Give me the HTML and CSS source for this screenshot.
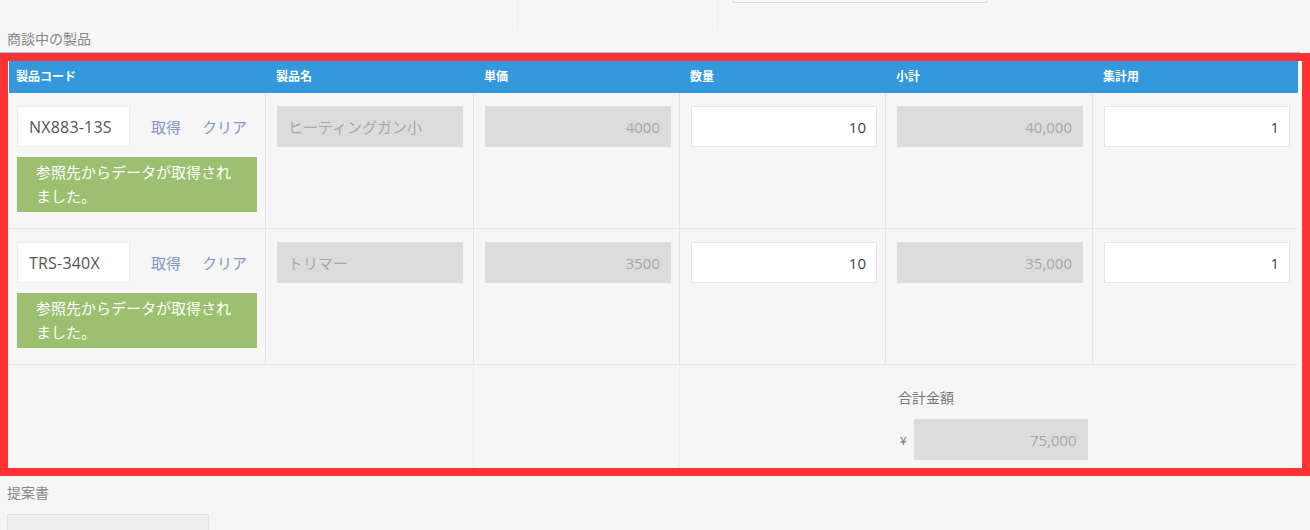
FILE: index.html
```html
<!DOCTYPE html>
<html lang="ja">
    <head>
        <meta charset="utf-8">
        <title>商談中の製品</title>
        <meta name="viewport" content="width=device-width, initial-scale=1">
        <link rel="stylesheet" href="styles.css">
    </head>

    <body>
        <div class="top-strip">
            <div class="strip-cell strip-a"></div>
            <div class="strip-cell strip-b"></div>
            <div class="strip-cell strip-c"><div class="strip-input"></div></div>
        </div>

        <div class="field-label table-label">商談中の製品</div>

        <div class="highlight">
            <div class="subtable">
                <div class="head-cell first">製品コード</div>
                <div class="head-cell">製品名</div>
                <div class="head-cell">単価</div>
                <div class="head-cell">数量</div>
                <div class="head-cell">小計</div>
                <div class="head-cell">集計用</div>

                <!-- 1行目 -->
                <div class="cell first">
                    <div class="lookup">
                        <input class="code-input" type="text" value="NX883-13S">
                        <span class="lookup-link">取得</span>
                        <span class="lookup-link">クリア</span>
                    </div>
                    <div class="lookup-msg">参照先からデータが取得されました。</div>
                </div>
                <div class="cell"><input class="box readonly left" type="text" value="ヒーティングガン小" readonly></div>
                <div class="cell"><input class="box readonly" type="text" value="4000" readonly></div>
                <div class="cell"><input class="box" type="text" value="10"></div>
                <div class="cell"><input class="box readonly" type="text" value="40,000" readonly></div>
                <div class="cell last"><input class="box" type="text" value="1"></div>

                <!-- 2行目 -->
                <div class="cell first">
                    <div class="lookup">
                        <input class="code-input" type="text" value="TRS-340X">
                        <span class="lookup-link">取得</span>
                        <span class="lookup-link">クリア</span>
                    </div>
                    <div class="lookup-msg">参照先からデータが取得されました。</div>
                </div>
                <div class="cell"><input class="box readonly left" type="text" value="トリマー" readonly></div>
                <div class="cell"><input class="box readonly" type="text" value="3500" readonly></div>
                <div class="cell"><input class="box" type="text" value="10"></div>
                <div class="cell"><input class="box readonly" type="text" value="35,000" readonly></div>
                <div class="cell last"><input class="box" type="text" value="1"></div>

                <!-- 合計 -->
                <div class="foot-cell none"></div>
                <div class="foot-cell"></div>
                <div class="foot-cell"></div>
                <div class="foot-cell none"></div>
                <div class="foot-cell total">
                    <div class="total-label">合計金額</div>
                    <div class="total-row">
                        <span class="yen">¥</span>
                        <input class="box readonly total-box" type="text" value="75,000" readonly>
                    </div>
                </div>
                <div class="foot-cell none"></div>
            </div>
        </div>

        <div class="field-label proposal-label">提案書</div>
        <div class="proposal-box"></div>
    </body>
</html>
```

FILE: styles.css
```css
body {
    margin: 0;
    background-color: #f6f6f6;
    font-family: "Noto Sans CJK JP", "Noto Sans", sans-serif;
    color: #555;
    overflow: hidden;
}

.top-strip {
    display: flex;
    height: 30px;
}

.strip-cell {
    box-sizing: border-box;
    height: 30px;
}

.strip-a {
    width: 518px;
    border-right: 1px solid #efefef;
}

.strip-b {
    width: 200px;
    border-right: 1px solid #efefef;
}

.strip-c {
    padding-left: 15px;
}

.strip-input {
    width: 254px;
    height: 3px;
    box-sizing: border-box;
    background-color: #fafafa;
    border: 1px solid #dedede;
    border-top: none;
}

.field-label {
    font-size: 14px;
    line-height: 16px;
    color: #888;
    padding-left: 7px;
}

.table-label {
    height: 22px;
    margin-right: 10px;
    border-bottom: 1px solid #8fc6ef;
}

.highlight {
    border: 8px solid #ff3333;
}

.subtable {
    display: grid;
    grid-template-columns: 257px 208px 206px 206px 207px 205px;
    margin: 0 4px 0 1px;
}

.head-cell {
    height: 32px;
    line-height: 30px;
    background-color: #3498dd;
    color: #fff;
    font-size: 12px;
    font-weight: bold;
    padding-left: 10px;
}

.head-cell.first {
    padding-left: 7px;
}

.cell {
    height: 136px;
    box-sizing: border-box;
    padding: 13px 0 0 11px;
    border-right: 1px solid #e4e4e4;
    border-bottom: 1px solid #e4e4e4;
}

.cell.first {
    padding-left: 8px;
}

.cell.last {
    border-right: none;
}

.lookup {
    display: flex;
    align-items: center;
    gap: 21px;
}

.code-input {
    width: 113px;
    height: 41px;
    box-sizing: border-box;
    padding: 0 0 0 11px;
    border: 1px solid #ececec;
    background-color: #fff;
    font-family: "Open Sans", "Noto Sans CJK JP", sans-serif;
    font-size: 16px;
    letter-spacing: 0.2px;
    color: #555;
    outline: none;
}

.lookup-link {
    font-size: 15px;
    color: #7d95c4;
}

.lookup-msg {
    width: 240px;
    box-sizing: border-box;
    margin-top: 10px;
    padding: 3px 20px 4px 19px;
    background-color: #9cc06f;
    color: #fff;
    font-size: 15px;
    line-height: 24px;
}

.box {
    display: block;
    width: 186px;
    height: 41px;
    box-sizing: border-box;
    padding: 0 10px;
    border: 1px solid #e6e6e6;
    background-color: #fff;
    font-family: "Open Sans", "Noto Sans CJK JP", sans-serif;
    font-size: 15px;
    color: #444;
    text-align: right;
    outline: none;
}

.box.readonly {
    background-color: #dcdcdc;
    border-color: #dcdcdc;
    color: #a8a8a8;
}

.box.left {
    text-align: left;
    font-family: "Noto Sans CJK JP", sans-serif;
    font-size: 15px;
}

.foot-cell {
    height: 103px;
    box-sizing: border-box;
    border-right: 1px solid #eeeeee;
}

.foot-cell.none {
    border-right: none;
}

.total {
    padding: 24px 0 0 12px;
    border-right: none;
}

.total-label {
    font-size: 14px;
    line-height: 16px;
    color: #777;
}

.total-row {
    display: flex;
    align-items: center;
    gap: 7px;
    margin-top: 14px;
    margin-left: 2px;
}

.yen {
    font-size: 12px;
    color: #777;
}

.total-box {
    width: 174px;
    flex: none;
}

.proposal-label {
    margin-top: 8px;
}

.proposal-box {
    width: 200px;
    height: 30px;
    margin: 14px 0 0 7px;
    background-color: #efefef;
    border: 1px solid #e2e2e2;
}
```
